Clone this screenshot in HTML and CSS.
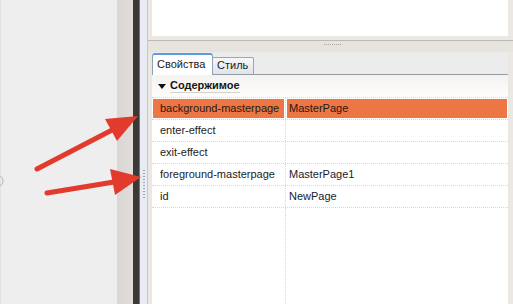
FILE: index.html
```html
<!DOCTYPE html>
<html>
<head>
<meta charset="utf-8">
<link rel="stylesheet" href="styles.css">
</head>
<body>
<div class="app">
  <div class="left"></div>
  <div class="sash-v"></div>
  <div class="dark"></div>
  <div class="splitter"><div class="grip-v"></div></div>
  <div class="right">
    <div class="top"><div class="top-box"></div></div>
    <div class="sash-h"><div class="grip-h"></div></div>
    <div class="props">
      <div class="tabs">
        <div class="tab active">Свойства</div>
        <div class="tab">Стиль</div>
      </div>
      <div class="content">
        <div class="group"><span class="tri"></span><span class="gtitle">Содержимое</span></div>
        <div class="grid">
          <div class="row selected"><div class="c1"><div class="cell">background-masterpage</div></div><div class="c2"><div class="cell">MasterPage</div></div></div>
          <div class="row"><div class="c1"><div class="cell">enter-effect</div></div><div class="c2"><div class="cell"></div></div></div>
          <div class="row"><div class="c1"><div class="cell">exit-effect</div></div><div class="c2"><div class="cell"></div></div></div>
          <div class="row"><div class="c1"><div class="cell">foreground-masterpage</div></div><div class="c2"><div class="cell">MasterPage1</div></div></div>
          <div class="row"><div class="c1"><div class="cell">id</div></div><div class="c2"><div class="cell">NewPage</div></div></div>
          <div class="filler"><div class="c1"></div></div>
        </div>
      </div>
    </div>
  </div>
  <svg class="overlay" width="513" height="304" viewBox="0 0 513 304">
    <circle cx="-3" cy="181" r="6" fill="none" stroke="#b4b4b4" stroke-width="1"/>
    <line x1="37" y1="169" x2="114" y2="129" stroke="#e23b2e" stroke-width="5" stroke-linecap="round"/>
    <polygon points="105,119 138,116 117,141" fill="#e23b2e"/>
    <line x1="47" y1="193" x2="114" y2="182" stroke="#e23b2e" stroke-width="5" stroke-linecap="round"/>
    <polygon points="110,169 141,177 115,195" fill="#e23b2e"/>
  </svg>
</div>
</body>
</html>
```

FILE: styles.css
```css
* { box-sizing: border-box; }
html, body { margin: 0; padding: 0; }
body {
  width: 513px;
  height: 304px;
  overflow: hidden;
  font-family: "Liberation Sans", Arial, sans-serif;
  font-size: 11px;
  color: #1c1c1c;
}
.app {
  position: relative;
  display: flex;
  width: 513px;
  height: 304px;
}
.left {
  width: 117px;
  background: #eeeeee;
  border-left: 1px solid #e2e2e2;
}
.sash-v {
  width: 16px;
  background: linear-gradient(to right, #dad6d3, #e0dddb);
}
.dark {
  width: 6px;
  background: #3a3935;
}
.splitter {
  width: 8px;
  background: #e9ebf2;
  border-left: 1px solid #77766b;
  position: relative;
}
.grip-v {
  position: absolute;
  left: 3px;
  top: 170px;
  width: 2px;
  height: 30px;
  background: repeating-linear-gradient(to bottom, #8ea7c7 0 1px, transparent 1px 3px);
}
.right {
  width: 366px;
  display: flex;
  flex-direction: column;
  border-left: 1px solid #cac6c1;
  background: #ebe8e3;
}
.top {
  padding: 0 5px 4px 4px;
  border-bottom: 1px solid #bcb8b2;
}
.top-box {
  height: 36px;
  background: #ffffff;
}
.sash-h {
  height: 11px;
  background: #e7e4e0;
  display: flex;
  justify-content: center;
  padding-top: 3px;
}
.grip-h {
  width: 17px;
  height: 1px;
  margin-left: 4px;
  background: repeating-linear-gradient(to right, #a8a5a0 0 1px, transparent 1px 2px);
}
.props {
  flex: 1;
  display: flex;
  flex-direction: column;
  margin: 0 5px 0 4px;
  background: #ffffff;
}
.tabs {
  height: 23px;
  display: flex;
  align-items: flex-end;
  background: #ececec;
  border-bottom: 1px solid #929ca7;
}
.tab {
  height: 17px;
  width: 41px;
  margin-bottom: 0;
  padding-left: 4px;
  line-height: 15px;
  background: linear-gradient(to bottom, #f6f7f8, #dfe4ea);
  border: 1px solid #98a7b6;
  border-bottom: none;
  border-left: none;
  border-radius: 0 2px 0 0;
  color: #1a1a1a;
}
.tab.active {
  height: 22px;
  width: 61px;
  margin-bottom: -1px;
  padding-left: 4px;
  line-height: 19px;
  background: #ffffff;
  border: 1px solid #8fa3b7;
  border-top: 2px solid #5d9be0;
  border-bottom: none;
  border-radius: 3px 3px 0 0;
  position: relative;
}
.content {
  flex: 1;
  display: flex;
  flex-direction: column;
  background: #ffffff;
}
.group {
  height: 22px;
  display: flex;
  align-items: center;
  padding-left: 6px;
  background: linear-gradient(to bottom, #f5f3f0, #fdfdfc);
  font-weight: bold;
  color: #141414;
}
.tri {
  width: 0;
  height: 0;
  border-left: 4px solid transparent;
  border-right: 4px solid transparent;
  border-top: 5px solid #111;
  margin-right: 4px;
  margin-top: 1px;
}
.gtitle {
  padding-bottom: 1px;
  border-bottom: 1px solid #d4d2ce;
  line-height: 12px;
}
.grid {
  flex: 1;
  display: flex;
  flex-direction: column;
}
.row {
  display: flex;
  height: 22px;
  border-top: 1px dotted #d6d6d6;
}
.c1 {
  width: 134px;
  padding: 1px;
  border-right: 1px dotted #d6d6d6;
}
.c2 {
  flex: 1;
  padding: 1px 1px 1px 1px;
}
.cell {
  height: 19px;
  line-height: 19px;
  white-space: nowrap;
}
.c1 .cell { padding-left: 7px; }
.c2 .cell { padding-left: 2px; color: #1b1b2e; }
.row.selected .cell {
  background: #ee7544;
  color: #2a1a12;
}
.filler {
  flex: 1;
  display: flex;
  border-top: 1px dotted #d6d6d6;
}
.overlay {
  position: absolute;
  left: 0;
  top: 0;
  pointer-events: none;
}
```
